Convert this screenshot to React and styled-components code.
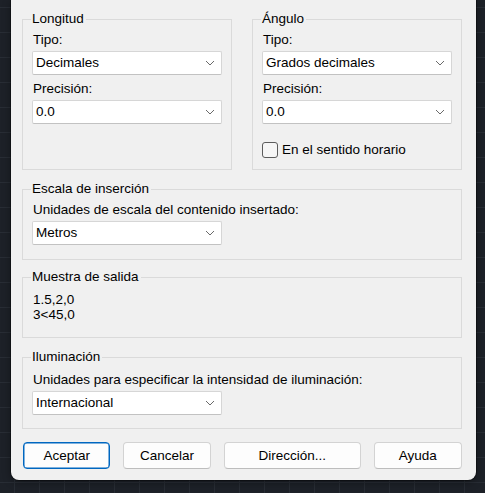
import React from "react";
import styled, { createGlobalStyle } from "styled-components";

const Global = createGlobalStyle`
  html, body {
    margin: 0;
    padding: 0;
    width: 485px;
    height: 493px;
    overflow: hidden;
    background-color: #1d2128;
    background-image:
      linear-gradient(to right, #282d35 1px, transparent 1px),
      linear-gradient(to bottom, #282d35 1px, transparent 1px);
    background-size: 25px 25px;
    background-position: 14px 7px;
    font-family: "Liberation Sans", Arial, sans-serif;
    font-size: 13.5px;
    color: #000;
  }
`;

const Dialog = styled.div`
  box-sizing: border-box;
  margin-left: 11px;
  width: 465px;
  height: 480px;
  background: #f0f0f0;
  border-radius: 0 0 8px 8px;
  box-shadow: 0 0 0 1px rgba(0, 0, 0, 0.35), 0 2px 8px rgba(0, 0, 0, 0.4);
  padding: 11px 14px 0 11px;
  display: flex;
  flex-direction: column;
`;

const Row = styled.div`
  display: flex;
  gap: 20px;
`;

const Group = styled.fieldset`
  box-sizing: border-box;
  margin: ${(p) => p.$mt || 0}px 0 0 0;
  width: ${(p) => (p.$w ? `${p.$w}px` : "auto")};
  height: ${(p) => p.$h}px;
  border: 1px solid #dadada;
  border-radius: 0;
  padding: ${(p) => p.$pt || 5}px 10px 0 9px;
  min-width: 0;
  display: flex;
  flex-direction: column;
`;

const Legend = styled.legend`
  padding: 0 2px 0 1px;
  margin-left: -1px;
  line-height: 16px;
  font-size: 13.5px;
`;

const Label = styled.div`
  line-height: 16px;
  margin-top: ${(p) => p.$mt || 0}px;
  margin-bottom: 3px;
  padding-left: 1px;
  white-space: nowrap;
`;

const SelectBox = styled.div`
  box-sizing: border-box;
  width: ${(p) => p.$w || 190}px;
  height: 24px;
  background: #fff;
  border: 1px solid #d6d6d6;
  border-bottom-color: #c2c2c2;
  border-radius: 2px;
  display: flex;
  align-items: center;
  justify-content: space-between;
  padding: 0 6px 0 3px;
  line-height: 16px;
`;

const Chevron = () => (
  <svg width="10" height="6" viewBox="0 0 10 6">
    <path d="M1 1 L5 5 L9 1" fill="none" stroke="#6a6a6a" strokeWidth="1" />
  </svg>
);

const Select = ({ value, w }) => (
  <SelectBox $w={w}>
    <span>{value}</span>
    <Chevron />
  </SelectBox>
);

const CheckRow = styled.label`
  display: flex;
  align-items: center;
  gap: 4px;
  margin-top: 18px;
  line-height: 16px;
`;

const Box = styled.span`
  box-sizing: border-box;
  width: 16px;
  height: 16px;
  border: 1px solid #5c5c5c;
  border-radius: 3px;
  background: #f6f6f6;
`;

const Sample = styled.div`
  line-height: 15px;
  padding-top: 2px;
  padding-left: 1px;
`;

const Buttons = styled.div`
  display: flex;
  gap: 13px;
  margin-top: 13px;
  padding-left: 1px;
`;

const Button = styled.button`
  box-sizing: border-box;
  width: ${(p) => p.$w}px;
  height: 27px;
  background: #fdfdfd;
  border: 1px solid ${(p) => (p.$primary ? "#0067c0" : "#d3d3d3")};
  border-bottom-color: ${(p) => (p.$primary ? "#0067c0" : "#bdbdbd")};
  box-shadow: ${(p) => (p.$primary ? "inset 0 0 0 0.5px #0067c0" : "none")};
  border-radius: 4px;
  font-family: "Liberation Sans", Arial, sans-serif;
  font-size: 13.5px;
  color: #000;
  padding: 0;
  line-height: 16px;
`;

export default function App() {
  return (
    <>
      <Global />
      <Dialog>
        <Row>
          <Group $w={211} $h={159}>
            <Legend>Longitud</Legend>
            <Label>Tipo:</Label>
            <Select value="Decimales" />
            <Label $mt={6}>Precisión:</Label>
            <Select value="0.0" />
          </Group>
          <Group $w={211} $h={159}>
            <Legend>Ángulo</Legend>
            <Label>Tipo:</Label>
            <Select value="Grados decimales" />
            <Label $mt={6}>Precisión:</Label>
            <Select value="0.0" />
            <CheckRow>
              <Box />
              <span>En el sentido horario</span>
            </CheckRow>
          </Group>
        </Row>
        <Group $mt={11} $h={79}>
          <Legend>Escala de inserción</Legend>
          <Label>Unidades de escala del contenido insertado:</Label>
          <Select value="Metros" />
        </Group>
        <Group $mt={9} $h={69}>
          <Legend>Muestra de salida</Legend>
          <Sample>
            1.5,2,0
            <br />
            3&lt;45,0
          </Sample>
        </Group>
        <Group $mt={11} $h={80} $pt={7}>
          <Legend>Iluminación</Legend>
          <Label>Unidades para especificar la intensidad de iluminación:</Label>
          <Select value="Internacional" />
        </Group>
        <Buttons>
          <Button $w={88} $primary>Aceptar</Button>
          <Button $w={88}>Cancelar</Button>
          <Button $w={138}>Dirección...</Button>
          <Button $w={89}>Ayuda</Button>
        </Buttons>
      </Dialog>
    </>
  );
}
